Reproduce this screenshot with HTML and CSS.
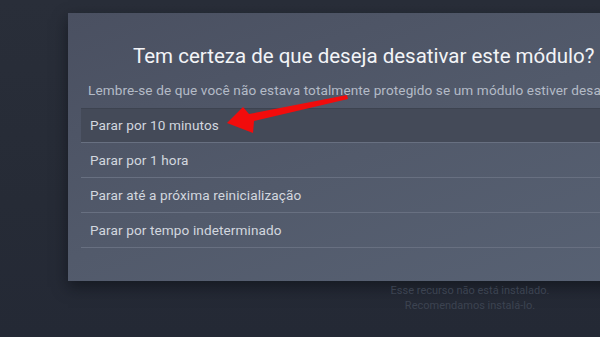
FILE: index.html
```html
<!DOCTYPE html>
<html lang="pt">
<head>
<meta charset="utf-8">
<link rel="stylesheet" href="styles.css">
</head>
<body>
<div class="page">
  <div class="dialog">
    <h1 class="title">Tem certeza de que deseja desativar este módulo?</h1>
    <p class="subtitle">Lembre-se de que você não estava totalmente protegido se um módulo estiver desativado por muito tempo.</p>
    <ul class="options">
      <li class="option active">Parar por 10 minutos</li>
      <li class="option">Parar por 1 hora</li>
      <li class="option">Parar até a próxima reinicialização</li>
      <li class="option">Parar por tempo indeterminado</li>
    </ul>
  </div>
  <div class="notice">
    <div>Esse recurso não está instalado.</div>
    <div>Recomendamos instalá-lo.</div>
  </div>
  <svg class="arrow" width="600" height="337" viewBox="0 0 600 337">
    <polygon points="227,123 243,107 249,114 347,95 348,99 254,121 253,133" fill="#f20c0c"/>
  </svg>
</div>
</body>
</html>
```
FILE: styles.css
```css
html, body {
  margin: 0;
  padding: 0;
  width: 600px;
  height: 337px;
  overflow: hidden;
  background: #262b36;
  font-family: Roboto, "Noto Sans", sans-serif;
}
.page {
  position: relative;
  width: 600px;
  height: 337px;
  padding-top: 13px;
  box-sizing: border-box;
  background: linear-gradient(180deg, #292e39 0%, #262b36 60%, #242935 100%);
}
.dialog {
  margin-left: 68px;
  width: 620px;
  height: 268px;
  box-sizing: border-box;
  padding: 30px 0 0 13px;
  background: linear-gradient(160deg, #4a5061 0%, #525a6b 50%, #586274 100%);
  box-shadow: 0 6px 14px rgba(10, 12, 18, 0.55);
}
.title {
  margin: 0 0 0 52px;
  font-size: 20.5px;
  font-weight: 400;
  line-height: 26px;
  color: #f3f4f7;
  white-space: nowrap;
}
.subtitle {
  margin: 12px 0 0 7px;
  font-size: 13.6px;
  letter-spacing: 0.1px;
  line-height: 18px;
  color: #b4bbc7;
  white-space: nowrap;
}
.options {
  list-style: none;
  margin: 9px 0 0 0;
  padding: 0;
}
.option {
  height: 34px;
  line-height: 34px;
  padding-left: 9px;
  font-size: 13.6px;
  letter-spacing: 0.1px;
  color: #d2d7df;
  border-bottom: 1px solid #687081;
}
.option.active {
  background: #444a58;
  border-top: 1px solid #3d4350;
  height: 33px;
  line-height: 33px;
}
.notice {
  margin-left: 385px;
  width: 170px;
  margin-top: 2px;
  text-align: center;
  font-size: 11px;
  line-height: 15px;
  color: #3c4351;
  white-space: nowrap;
}
.arrow {
  position: absolute;
  left: 0;
  top: 0;
}
```
